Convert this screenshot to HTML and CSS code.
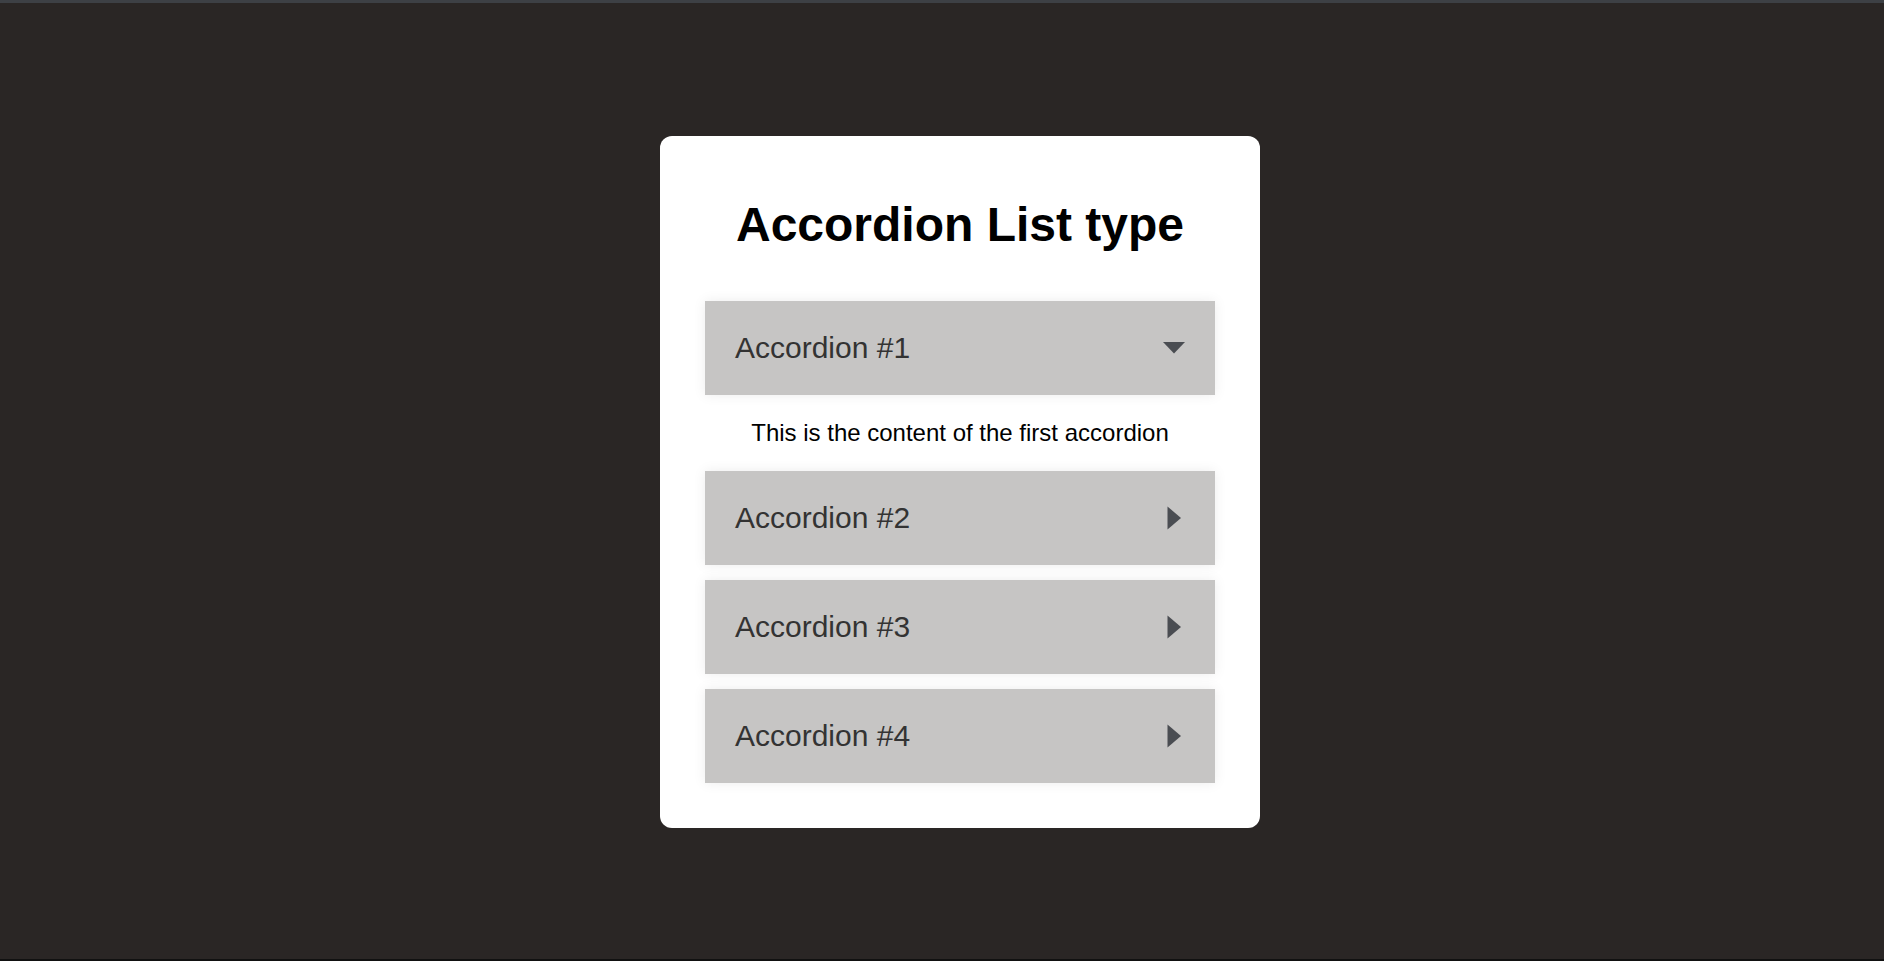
FILE: index.html
```html
<!DOCTYPE html>
<html lang="en">
<head>
<meta charset="utf-8">
<title>Accordion List type</title>
<link rel="stylesheet" href="styles.css">
</head>
<body>
<main class="stage">
  <section class="card">
    <h1 class="title">Accordion List type</h1>
    <div class="accordion">
      <div class="item open">
        <div class="header">
          <span class="label">Accordion #1</span>
          <svg class="caret" width="24" height="24" viewBox="0 0 24 24"><path d="M1 6 H23 L12 17.5 Z" fill="#4a4d52"/></svg>
        </div>
        <div class="content">This is the content of the first accordion</div>
      </div>
      <div class="item">
        <div class="header">
          <span class="label">Accordion #2</span>
          <svg class="caret" width="24" height="24" viewBox="0 0 24 24"><path d="M5.5 0.5 L19 12 L5.5 23.5 Z" fill="#4a4d52"/></svg>
        </div>
      </div>
      <div class="item">
        <div class="header">
          <span class="label">Accordion #3</span>
          <svg class="caret" width="24" height="24" viewBox="0 0 24 24"><path d="M5.5 0.5 L19 12 L5.5 23.5 Z" fill="#4a4d52"/></svg>
        </div>
      </div>
      <div class="item">
        <div class="header">
          <span class="label">Accordion #4</span>
          <svg class="caret" width="24" height="24" viewBox="0 0 24 24"><path d="M5.5 0.5 L19 12 L5.5 23.5 Z" fill="#4a4d52"/></svg>
        </div>
      </div>
    </div>
  </section>
</main>
</body>
</html>
```

FILE: styles.css
```css
* { box-sizing: border-box; }

html, body {
  margin: 0;
  height: 100%;
  background: #2a2625;
}

body {
  font-family: "Liberation Sans", Arial, sans-serif;
  border-top: 3px solid #3d4045;
  border-bottom: 2px solid #111;
}

.stage {
  height: 100%;
  display: flex;
  align-items: center;
  justify-content: center;
  padding-left: 36px;
  padding-top: 2px;
}

.card {
  width: 600px;
  background: #fff;
  border-radius: 12px;
  padding: 45px 45px 45px;
}

.title {
  margin: 16px 0 48px;
  font-size: 48px;
  line-height: 56px;
  font-weight: 700;
  color: #000;
  text-align: center;
}

.accordion {
  display: flex;
  flex-direction: column;
  gap: 15px;
}

.header {
  height: 94px;
  display: flex;
  align-items: center;
  justify-content: space-between;
  padding: 0 29px 0 30px;
  background: #c6c5c4;
  box-shadow: 0 0 12px rgba(0, 0, 0, 0.08);
}

.label {
  font-size: 30px;
  color: #333;
}

.caret {
  display: block;
}

.content {
  padding: 24px 0 9px;
  font-size: 24px;
  line-height: 28px;
  color: #000;
  text-align: center;
}
```
